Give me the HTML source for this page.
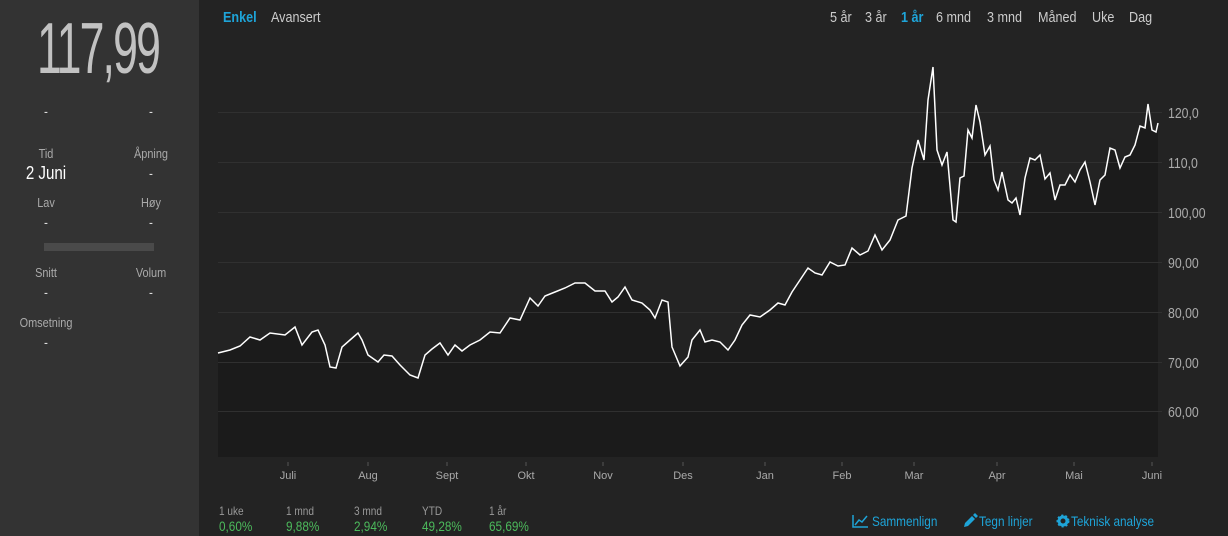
<!DOCTYPE html>
<html><head><meta charset="utf-8"><style>
*{margin:0;padding:0;box-sizing:border-box}
body{width:1228px;height:536px;background:#232323;font-family:"Liberation Sans",sans-serif;overflow:hidden;position:relative;color:#aaa}
.t{position:absolute;white-space:nowrap;transform:scaleX(.84);transform-origin:0 0}
#left{position:absolute;left:0;top:0;width:199px;height:536px;background:#333}
.c{position:absolute;transform:translateX(-50%) scaleX(.84);white-space:nowrap}
.lbl{font-size:13px;color:#aaa}
.val{font-size:14px;color:#ddd}
</style></head><body>
<div id="left">
<div class="c" style="left:98px;top:8px;font-size:72px;color:#c2c2c2;letter-spacing:-3px;transform:translateX(-50%) scaleX(.62)">117,99</div>
<div class="c val" style="left:46px;top:103px">-</div>
<div class="c val" style="left:151px;top:103px">-</div>
<div class="c lbl" style="left:46px;top:146px">Tid</div>
<div class="c lbl" style="left:151px;top:146px">Åpning</div>
<div class="c" style="left:46px;top:163px;font-size:18px;color:#fff">2 Juni</div>
<div class="c val" style="left:151px;top:165px">-</div>
<div class="c lbl" style="left:46px;top:195px">Lav</div>
<div class="c lbl" style="left:151px;top:195px">Høy</div>
<div class="c val" style="left:46px;top:214px">-</div>
<div class="c val" style="left:151px;top:214px">-</div>
<div style="position:absolute;left:44px;top:243px;width:110px;height:8px;background:#4a4a4a"></div>
<div class="c lbl" style="left:46px;top:265px">Snitt</div>
<div class="c lbl" style="left:151px;top:265px">Volum</div>
<div class="c val" style="left:46px;top:284px">-</div>
<div class="c val" style="left:151px;top:284px">-</div>
<div class="c lbl" style="left:46px;top:315px">Omsetning</div>
<div class="c val" style="left:46px;top:334px">-</div>
</div>

<div class="t" style="left:223px;top:9px;font-size:15px;color:#1ea4d8;font-weight:bold">Enkel</div>
<div class="t" style="left:271px;top:9px;font-size:15px;color:#ccc">Avansert</div>
<div class="t" style="left:830px;top:9px;font-size:15px;color:#ccc">5 år</div>
<div class="t" style="left:865px;top:9px;font-size:15px;color:#ccc">3 år</div>
<div class="t" style="left:901px;top:9px;font-size:15px;color:#1ea4d8;font-weight:bold">1 år</div>
<div class="t" style="left:936px;top:9px;font-size:15px;color:#ccc">6 mnd</div>
<div class="t" style="left:987px;top:9px;font-size:15px;color:#ccc">3 mnd</div>
<div class="t" style="left:1038px;top:9px;font-size:15px;color:#ccc">Måned</div>
<div class="t" style="left:1092px;top:9px;font-size:15px;color:#ccc">Uke</div>
<div class="t" style="left:1129px;top:9px;font-size:15px;color:#ccc">Dag</div>

<svg style="position:absolute;left:0;top:0" width="1228" height="536">
<path fill="#1b1b1b" d="M218,353 L230,350 240,346 250,337 260,340 270,333 285,335 295,327 302,345 312,332 318,330 325,345 330,367 336,368 342,347 350,340 358,333 362,340 368,355 378,362 384,355 392,356 400,365 410,375 418,378 425,355 432,349 440,343 448,355 455,345 462,351 470,345 480,340 490,332 500,333 510,318 520,320 530,298 538,306 545,296 555,292 565,288 575,283 585,283 595,291 605,291 612,302 618,297 625,287 632,300 642,303 650,310 655,318 662,300 668,302 672,347 680,366 688,357 692,340 700,330 705,342 712,340 720,342 728,350 735,340 742,325 750,315 760,317 770,310 778,303 785,305 792,292 800,280 808,268 815,273 822,275 830,262 838,266 845,265 852,248 860,255 868,251 875,235 882,250 890,240 898,220 906,216 912,168 918,140 924,160 928,100 933,67 937,150 942,165 947,152 953,220 956,222 960,178 964,176 968,130 972,138 976,105 980,122 985,155 990,146 994,180 998,190 1002,172 1008,200 1012,203 1016,198 1020,215 1025,178 1030,158 1035,160 1040,155 1045,179 1050,173 1055,200 1060,185 1065,185 1070,175 1075,182 1080,170 1085,162 1090,182 1095,205 1100,180 1105,175 1110,148 1115,150 1120,168 1125,157 1130,155 1135,145 1140,126 1145,128 1148,104 1152,130 1156,132 1158,123 L1158,457 L218,457Z"/>
<g stroke="#303030" stroke-width="1">
<line x1="218" y1="112.5" x2="1162" y2="112.5"/><line x1="218" y1="162.5" x2="1162" y2="162.5"/>
<line x1="218" y1="212.5" x2="1162" y2="212.5"/><line x1="218" y1="262.5" x2="1162" y2="262.5"/>
<line x1="218" y1="312.5" x2="1162" y2="312.5"/><line x1="218" y1="362.5" x2="1162" y2="362.5"/>
<line x1="218" y1="411.5" x2="1162" y2="411.5"/>
</g>
<path fill="none" stroke="#fff" stroke-width="1.5" d="M218,353 L230,350 240,346 250,337 260,340 270,333 285,335 295,327 302,345 312,332 318,330 325,345 330,367 336,368 342,347 350,340 358,333 362,340 368,355 378,362 384,355 392,356 400,365 410,375 418,378 425,355 432,349 440,343 448,355 455,345 462,351 470,345 480,340 490,332 500,333 510,318 520,320 530,298 538,306 545,296 555,292 565,288 575,283 585,283 595,291 605,291 612,302 618,297 625,287 632,300 642,303 650,310 655,318 662,300 668,302 672,347 680,366 688,357 692,340 700,330 705,342 712,340 720,342 728,350 735,340 742,325 750,315 760,317 770,310 778,303 785,305 792,292 800,280 808,268 815,273 822,275 830,262 838,266 845,265 852,248 860,255 868,251 875,235 882,250 890,240 898,220 906,216 912,168 918,140 924,160 928,100 933,67 937,150 942,165 947,152 953,220 956,222 960,178 964,176 968,130 972,138 976,105 980,122 985,155 990,146 994,180 998,190 1002,172 1008,200 1012,203 1016,198 1020,215 1025,178 1030,158 1035,160 1040,155 1045,179 1050,173 1055,200 1060,185 1065,185 1070,175 1075,182 1080,170 1085,162 1090,182 1095,205 1100,180 1105,175 1110,148 1115,150 1120,168 1125,157 1130,155 1135,145 1140,126 1145,128 1148,104 1152,130 1156,132 1158,123"/>
<g stroke="#555"><line x1="288" y1="462" x2="288" y2="466"/><line x1="368" y1="462" x2="368" y2="466"/><line x1="447" y1="462" x2="447" y2="466"/><line x1="526" y1="462" x2="526" y2="466"/><line x1="603" y1="462" x2="603" y2="466"/><line x1="683" y1="462" x2="683" y2="466"/><line x1="765" y1="462" x2="765" y2="466"/><line x1="842" y1="462" x2="842" y2="466"/><line x1="914" y1="462" x2="914" y2="466"/><line x1="997" y1="462" x2="997" y2="466"/><line x1="1074" y1="462" x2="1074" y2="466"/><line x1="1152" y1="462" x2="1152" y2="466"/></g>
<g fill="#aaa" font-size="15" font-family="Liberation Sans,sans-serif" transform="translate(1168,0) scale(.82,1)">
<text x="0" y="118">120,0</text><text x="0" y="168">110,0</text><text x="0" y="218">100,00</text><text x="0" y="268">90,00</text><text x="0" y="318">80,00</text><text x="0" y="368">70,00</text><text x="0" y="417">60,00</text>
</g>
<g fill="#aaa" font-size="11" text-anchor="middle" font-family="Liberation Sans,sans-serif">
<text x="288" y="479">Juli</text><text x="368" y="479">Aug</text><text x="447" y="479">Sept</text><text x="526" y="479">Okt</text><text x="603" y="479">Nov</text><text x="683" y="479">Des</text><text x="765" y="479">Jan</text><text x="842" y="479">Feb</text><text x="914" y="479">Mar</text><text x="997" y="479">Apr</text><text x="1074" y="479">Mai</text><text x="1152" y="479">Juni</text>
</g>
<g fill="none" stroke="#1ea4d8" stroke-width="1.5"><path d="M853,515 V527 H868"/><path d="M855,525 L859,520 862,522 867,516"/></g>
<path d="M964,527 L965,523 972,516 975,519 968,526Z M973,515 L975,513 978,516 976,518Z" fill="#1ea4d8"/>
<circle cx="1063" cy="521" r="4" fill="none" stroke="#1ea4d8" stroke-width="3"/>
<circle cx="1063" cy="521" r="5.5" fill="none" stroke="#1ea4d8" stroke-width="2" stroke-dasharray="2 2"/>
</svg>

<div class="t" style="left:219px;top:504px;font-size:12px;color:#999">1 uke</div>
<div class="t" style="left:286px;top:504px;font-size:12px;color:#999">1 mnd</div>
<div class="t" style="left:354px;top:504px;font-size:12px;color:#999">3 mnd</div>
<div class="t" style="left:422px;top:504px;font-size:12px;color:#999">YTD</div>
<div class="t" style="left:489px;top:504px;font-size:12px;color:#999">1 år</div>
<div class="t" style="left:219px;top:518px;font-size:14px;color:#4cba5c">0,60%</div>
<div class="t" style="left:286px;top:518px;font-size:14px;color:#4cba5c">9,88%</div>
<div class="t" style="left:354px;top:518px;font-size:14px;color:#4cba5c">2,94%</div>
<div class="t" style="left:422px;top:518px;font-size:14px;color:#4cba5c">49,28%</div>
<div class="t" style="left:489px;top:518px;font-size:14px;color:#4cba5c">65,69%</div>
<div class="t" style="left:872px;top:513px;font-size:14px;color:#1ea4d8">Sammenlign</div>
<div class="t" style="left:979px;top:513px;font-size:14px;color:#1ea4d8">Tegn linjer</div>
<div class="t" style="left:1071px;top:513px;font-size:14px;color:#1ea4d8">Teknisk analyse</div>
</body></html>
